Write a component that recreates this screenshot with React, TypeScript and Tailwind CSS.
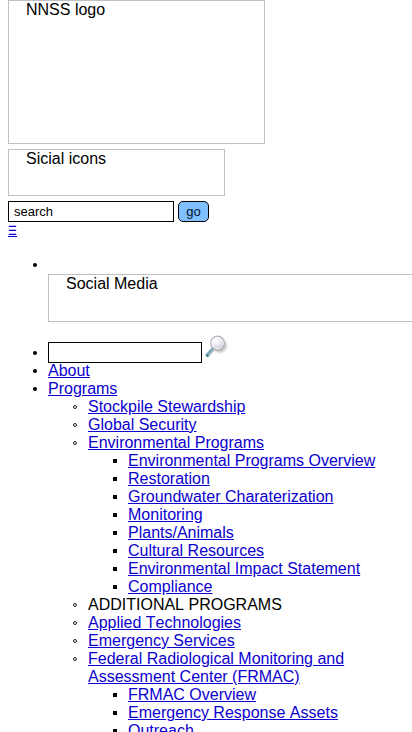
import type { ReactNode } from "react";

const disc =
  "before:mr-[11px] before:-ml-[15px] before:inline-block before:size-1 before:rounded-full before:bg-black before:align-[3px] before:content-['']";
const circle =
  "before:mr-[11px] before:-ml-[15px] before:inline-block before:size-1 before:rounded-full before:border before:border-[#222] before:align-[3px] before:content-['']";
const square =
  "before:mr-[11px] before:-ml-[15px] before:inline-block before:size-1 before:bg-black before:align-[3px] before:content-['']";

function Item({ label, marker, children }: { label: string; marker: string; children?: ReactNode }) {
  return (
    <li>
      <div className={marker}>
        <a href="#" className="text-[#0b00d0] underline">{label}</a>
      </div>
      {children}
    </li>
  );
}

const environmental = [
  "Environmental Programs Overview",
  "Restoration",
  "Groundwater Charaterization",
  "Monitoring",
  "Plants/Animals",
  "Cultural Resources",
  "Environmental Impact Statement",
  "Compliance",
];

const frmac = ["FRMAC Overview", "Emergency Response Assets", "Outreach"];

function Magnifier() {
  return (
    <svg width="25" height="27" viewBox="0 0 25 27" className="block">
      <defs>
        <radialGradient id="lens" cx="40%" cy="35%">
          <stop offset="0" stopColor="#ffffff" />
          <stop offset="0.65" stopColor="#ececf5" />
          <stop offset="1" stopColor="#cfcfdc" />
        </radialGradient>
        <filter id="soft" x="-30%" y="-30%" width="160%" height="160%">
          <feGaussianBlur stdDeviation="1.2" />
        </filter>
      </defs>
      <circle cx="15.5" cy="10.5" r="7.2" fill="#999" opacity=".6" filter="url(#soft)" />
      <path d="M9.5 13.5 3.5 20.5" stroke="#b4c0c6" strokeWidth="4" />
      <path d="M8.5 13.5 2.5 20.5" stroke="#77a9bd" strokeWidth="2.5" />
      <path d="M2 20l2.5 1.5" stroke="#3e7187" strokeWidth="2" />
      <circle cx="13.5" cy="8" r="6.8" fill="url(#lens)" stroke="#b4b4bc" strokeWidth="1.3" />
      <circle cx="13.5" cy="8" r="5.6" fill="none" stroke="#fff" strokeWidth="1" />
    </svg>
  );
}

export default function App() {
  return (
    <div className="h-[732px] w-full overflow-hidden bg-white pl-2 font-['Liberation_Sans',Arial,sans-serif] text-[16px] leading-[18px] text-black [font-kerning:none]">
      <div className="h-[144px] w-[257px] border border-[#c0c0c0] pl-[17px]">NNSS logo</div>
      <div className="mt-[5px] h-[47px] w-[217px] border border-[#c0c0c0] pl-[17px]">Sicial icons</div>
      <form className="mt-[5px] flex h-[21px] gap-1">
        <input
          defaultValue="search"
          className="h-[21px] w-[166px] border border-black pl-[5px] text-[13px] leading-[15px] outline-none"
        />
        <button
          type="button"
          className="h-[21px] w-[31px] rounded-[5px] border border-black bg-[#80c0ff] text-[13px] leading-[15px] text-[#001030]"
        >
          go
        </button>
      </form>
      <div className="h-[34px] pt-[2px]">
        <a
          href="#"
          className="block h-[13px] w-[9px] border-b border-[#0b00d0] font-['DejaVu_Sans',sans-serif] text-[10px] leading-[13px] text-[#0b00d0]"
        >
          <span className="block scale-y-[1.3]">☰</span>
        </a>
      </div>
      <ul className="pl-10">
        <li>
          <div className={`h-[18px] ${disc}`} />
          <div className="mb-[13px] h-[48px] w-[400px] border border-[#c0c0c0] pl-[17px]">Social Media</div>
        </li>
        <li className="flex h-[27px]">
          <span className="mt-[16px] mr-[11px] -ml-[15px] size-1 rounded-full bg-black" />
          <input className="mt-[7px] h-[21px] w-[154px] border border-black outline-none" />
          <span className="ml-[2px]"><Magnifier /></span>
        </li>
        <Item marker={disc} label="About" />
        <Item marker={disc} label="Programs">
          <ul className="pl-10">
            <Item marker={circle} label="Stockpile Stewardship" />
            <Item marker={circle} label="Global Security" />
            <Item marker={circle} label="Environmental Programs">
              <ul className="pl-10">
                {environmental.map((label) => <Item key={label} marker={square} label={label} />)}
              </ul>
            </Item>
            <li className={circle}>ADDITIONAL PROGRAMS</li>
            <Item marker={circle} label="Applied Technologies" />
            <Item marker={circle} label="Emergency Services" />
            <Item marker={circle} label="Federal Radiological Monitoring and Assessment Center (FRMAC)">
              <ul className="pl-10">
                {frmac.map((label) => <Item key={label} marker={square} label={label} />)}
              </ul>
            </Item>
          </ul>
        </Item>
      </ul>
    </div>
  );
}
